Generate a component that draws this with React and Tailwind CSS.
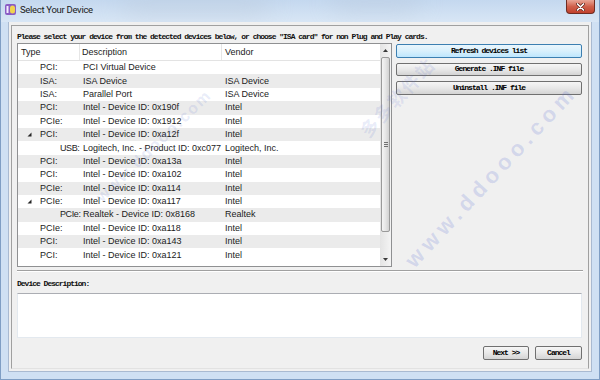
import React from "react";

const rows = [
  { t: "PCI:", d: "PCI Virtual Device", v: "" },
  { t: "ISA:", d: "ISA Device", v: "ISA Device" },
  { t: "ISA:", d: "Parallel Port", v: "ISA Device" },
  { t: "PCI:", d: "Intel - Device ID: 0x190f", v: "Intel" },
  { t: "PCIe:", d: "Intel - Device ID: 0x1912", v: "Intel" },
  { t: "PCI:", d: "Intel - Device ID: 0xa12f", v: "Intel", arrow: true },
  { t: "USB:", d: "Logitech, Inc. - Product ID: 0xc077", v: "Logitech, Inc.", child: true },
  { t: "PCI:", d: "Intel - Device ID: 0xa13a", v: "Intel" },
  { t: "PCI:", d: "Intel - Device ID: 0xa102", v: "Intel" },
  { t: "PCIe:", d: "Intel - Device ID: 0xa114", v: "Intel" },
  { t: "PCIe:", d: "Intel - Device ID: 0xa117", v: "Intel", arrow: true },
  { t: "PCIe:", d: "Realtek - Device ID: 0x8168", v: "Realtek", child: true },
  { t: "PCIe:", d: "Intel - Device ID: 0xa118", v: "Intel" },
  { t: "PCI:", d: "Intel - Device ID: 0xa143", v: "Intel" },
  { t: "PCI:", d: "Intel - Device ID: 0xa121", v: "Intel" },
];

function Arrow() {
  return (
    <svg width="5" height="5" viewBox="0 0 5 5" className="ml-[9px] shrink-0">
      <path d="M4.5 0.5 L4.5 4.5 L0.5 4.5 Z" fill="#262626" />
    </svg>
  );
}

function Row({ r, i }) {
  return (
    <div
      className={
        "flex h-[13.4px] items-center text-[9px] leading-none text-[#1b1b1b] whitespace-nowrap " +
        (i % 2 ? "bg-[#ebebeb]" : "bg-white")
      }
    >
      <div className="flex w-[62px] shrink-0 items-center">
        {r.arrow ? (
          <>
            <Arrow />
            <span className="ml-[8px]">{r.t}</span>
          </>
        ) : r.child ? (
          <span className="pl-[42px] tracking-[-0.4px]">{r.t}</span>
        ) : (
          <span className="pl-[22px]">{r.t}</span>
        )}
      </div>
      <div className="w-[142px] shrink-0 pl-[3px]">
        <span>{r.d}</span>
      </div>
      <div className="pl-[3px]">{r.v}</div>
    </div>
  );
}

function Btn({ children, blue, className = "" }) {
  return (
    <div
      className={
        "flex items-center justify-center rounded-[2px] border font-['Liberation_Mono',monospace] text-[8px] font-bold leading-none tracking-[-1px] text-black " +
        (blue
          ? "border-[#3c7fb1] bg-gradient-to-b from-[#eaf6fd] via-[#d9f0fc] to-[#bee6fd] "
          : "border-[#707070] bg-gradient-to-b from-[#f6f6f6] via-[#e8e8e8] to-[#d4d4d4] ") +
        className
      }
    >
      {children}
    </div>
  );
}

function ScrollBar() {
  return (
    <div className="flex w-[11px] shrink-0 flex-col bg-gradient-to-r from-[#e4e4e4] to-[#f4f4f4]">
      <div className="flex h-[13px] items-center justify-center">
        <svg width="5" height="3" viewBox="0 0 5 3">
          <path d="M0 3 L2.5 0 L5 3 Z" fill="#3a3a3a" />
        </svg>
      </div>
      <div className="mx-[1px] flex h-[175px] items-center justify-center rounded-[2px] border border-[#9a9a9a] bg-gradient-to-r from-[#f5f5f5] via-[#e6e6e6] to-[#d2d2d2]">
        <div className="flex flex-col gap-[1px]">
          <div className="h-px w-[4px] bg-[#707070]" />
          <div className="h-px w-[4px] bg-[#707070]" />
          <div className="h-px w-[4px] bg-[#707070]" />
        </div>
      </div>
      <div className="flex-1" />
      <div className="flex h-[13px] items-center justify-center">
        <svg width="5" height="3" viewBox="0 0 5 3">
          <path d="M0 0 L2.5 3 L5 0 Z" fill="#3a3a3a" />
        </svg>
      </div>
    </div>
  );
}

export default function App() {
  const mono =
    "font-['Liberation_Mono',monospace] text-[8px] font-bold leading-[9px] tracking-[-1px] text-[#111]";
  return (
    <div className="relative h-[380px] w-[600px] overflow-hidden border-x border-b border-[#7f9ec4] bg-[#cfe0f3] font-['Liberation_Sans',sans-serif]">
      {/* title bar */}
      <div className="relative flex h-[22px] items-start overflow-hidden bg-gradient-to-b from-[#c4d8ef] to-[#d8e6f5] pl-[4px] pr-[2px]">
        <div className="absolute left-[120px] top-[-6px] h-[22px] w-[150px] rounded-full bg-[#b9c6d6] opacity-40 blur-md" />
        <div className="absolute left-[330px] top-[-8px] h-[20px] w-[90px] rounded-full bg-[#b4c3d6] opacity-40 blur-md" />
        <svg width="11" height="11" viewBox="0 0 11 11" className="relative mt-[4px]">
          <rect x="0" y="0" width="11" height="11" rx="2" fill="#8a5cc4" />
          <rect x="5" y="1.5" width="5" height="8" rx="2.5" fill="#f1d34e" />
          <rect x="1.5" y="2" width="2" height="7" fill="#f4ecff" />
        </svg>
        <span className="relative ml-[4px] mt-[4px] font-['Roboto',sans-serif] text-[9.5px] leading-[11px] tracking-[-0.3px] text-[#1a1a1a]">
          Select Your Device
        </span>
        <div className="relative ml-auto mr-[2px] flex h-[14px] w-[29px] items-center justify-center rounded-b-[4px] border border-t-0 border-[#6e2c22] bg-gradient-to-b from-[#e8a596] via-[#d0604b] to-[#c0402c]">
          <svg width="9" height="8" viewBox="0 0 9 8">
            <path d="M1.5 1 L7.5 7 M7.5 1 L1.5 7" stroke="#5a1d14" strokeWidth="3" strokeLinecap="round" />
            <path d="M1.5 1 L7.5 7 M7.5 1 L1.5 7" stroke="#ffffff" strokeWidth="1.7" strokeLinecap="round" />
          </svg>
        </div>
      </div>

      {/* client area */}
      <div className="ml-[7px] h-[350px] w-[584px] border-x border-b border-[#a9bad1] bg-[#f0f0f0] pl-[2px] pt-[3px]">
        <div className="h-[344px] w-[578px] border border-[#a0a0a0] border-b-[#e2e2e2] pl-[5px] pr-[6px]">
          <div className={"h-[17px] pt-[6px] whitespace-nowrap " + mono}>
            Please select your device from the detected devices below, or choose "ISA card" for non Plug and Play cards.
          </div>

          {/* list + buttons */}
          <div className="flex h-[224px]">
            <div className="flex h-[224px] w-[375px] border border-[#8f9092] bg-white">
              <div className="flex w-[362px] flex-col">
                <div className="flex h-[17px] shrink-0 items-center border-b border-[#e3e3e3] bg-white text-[9px] leading-none text-[#1b1b1b]">
                  <div className="flex h-full w-[62px] items-center border-r border-[#e6e6e6] pl-[3px]">Type</div>
                  <div className="flex h-full w-[142px] items-center border-r border-[#e6e6e6] pl-[2px]">Description</div>
                  <div className="pl-[3px]">Vendor</div>
                </div>
                {rows.map((r, i) => (
                  <Row key={i} r={r} i={i} />
                ))}
              </div>
              <ScrollBar />
            </div>
            <div className="ml-[4px] flex w-[186px] flex-col gap-[5px] pt-[1px]">
              <Btn blue className="h-[13.5px]">Refresh devices list</Btn>
              <Btn className="h-[13.5px]">Generate .INF file</Btn>
              <Btn className="h-[13.5px]">Uninstall .INF file</Btn>
            </div>
          </div>

          <div className="mt-[3px] h-[2px] w-[566px] border-t border-b border-t-[#a0a0a0] border-b-white" />

          <div className={"mt-[7px] h-[9px] " + mono}>Device Description:</div>

          <div className="mt-[5px] h-[45px] w-[565px] border border-[#e3e9ef] border-t-[#abadb3] bg-white" />

          <div className="mt-[8px] flex w-[565px] justify-end gap-[6px]">
            <Btn className="h-[14px] w-[46px]">Next &gt;&gt;</Btn>
            <Btn className="h-[14px] w-[47px]">Cancel</Btn>
          </div>
        </div>
      </div>

      {/* watermark */}
      <div className="pointer-events-none absolute left-[490px] top-[176px] -translate-x-1/2 -translate-y-1/2 -rotate-[47deg] whitespace-nowrap font-['Liberation_Sans',sans-serif] text-[22px] font-bold tracking-[5px] text-[#5a6fd0]/20">
        www.ddooo.com
      </div>
      <div className="pointer-events-none absolute left-[153px] top-[146px] -translate-x-1/2 -translate-y-1/2 -rotate-[44deg] whitespace-nowrap font-['Liberation_Sans',sans-serif] text-[16px] font-bold tracking-[2px] text-[#5a6fd0]/15">
        www.ddooo.com
      </div>
      <div className="pointer-events-none absolute left-[396px] top-[97px] -translate-x-1/2 -translate-y-1/2 -rotate-[47deg] whitespace-nowrap font-['Noto_Sans_CJK_SC',sans-serif] text-[18px] font-bold tracking-[2px] text-[#5a6fd0]/15">
        多多软件站
      </div>
    </div>
  );
}
